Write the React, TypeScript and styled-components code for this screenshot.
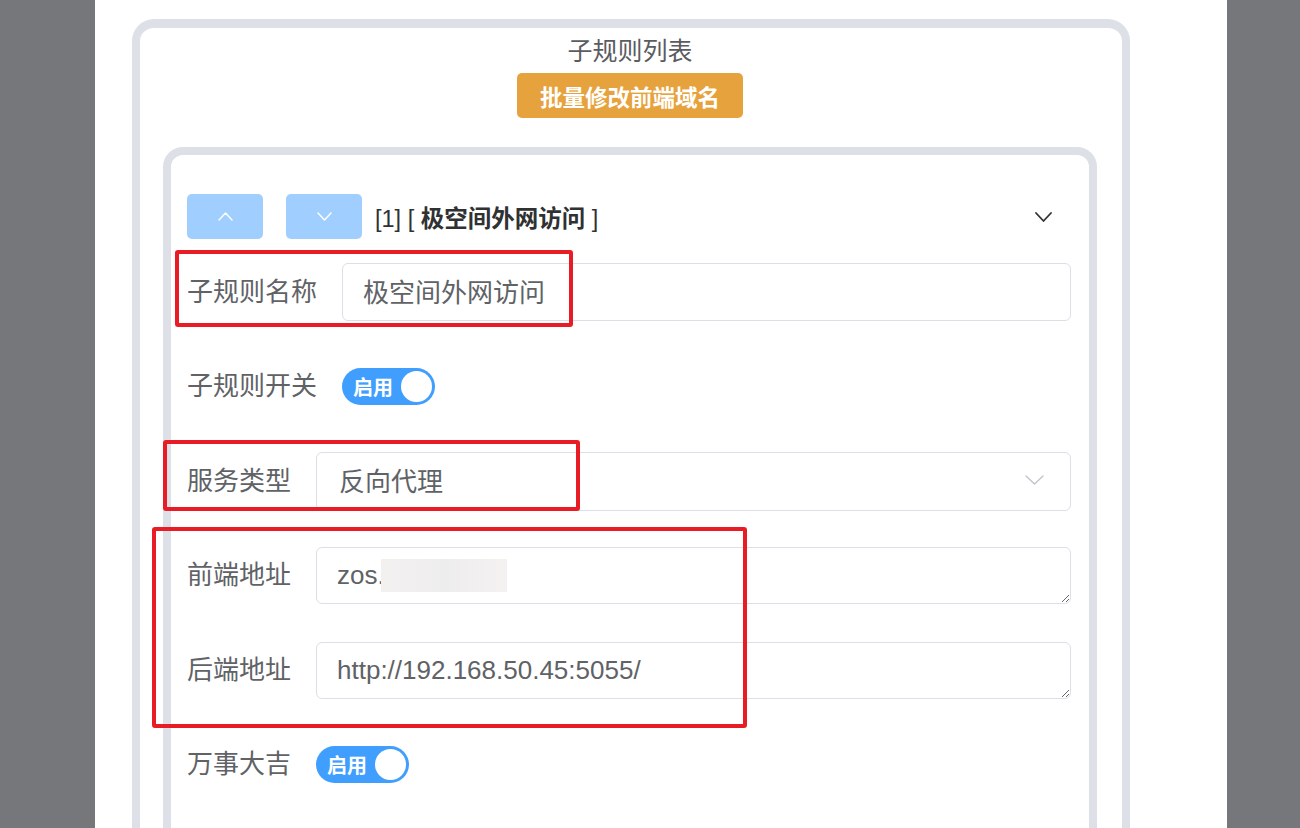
import React from 'react';
import styled, { createGlobalStyle } from 'styled-components';

const GlobalStyle = createGlobalStyle`
  html, body {
    margin: 0;
    padding: 0;
    background: #75777b;
    font-family: "Liberation Sans", "Noto Sans CJK SC", sans-serif;
    overflow: hidden;
  }
  * {
    box-sizing: border-box;
  }
`;

const Page = styled.div`
  min-height: 100vh;
  padding-left: 95px;
  display: flex;
`;

const Panel = styled.div`
  position: relative;
  width: 1132px;
  min-height: 828px;
  height: 828px;
  overflow: hidden;
  background: #ffffff;
  padding: 19px 0 0 37px;
`;

const OuterCard = styled.section`
  width: 998px;
  min-height: 900px;
  border: 8px solid #dde0e7;
  border-top-width: 9px;
  border-radius: 22px;
  padding: 5px 25px 0 23px;
  display: flex;
  flex-direction: column;
  align-items: center;
`;

const Title = styled.h2`
  margin: 0;
  font-size: 25px;
  line-height: 36px;
  font-weight: 400;
  color: #5a5c61;
`;

const WarnButton = styled.button`
  margin-top: 4px;
  height: 45px;
  padding: 0 23px;
  border: none;
  border-radius: 5px;
  background: #e6a23c;
  color: #ffffff;
  font-family: inherit;
  font-size: 22.5px;
  font-weight: 700;
  cursor: pointer;
`;

const RuleCard = styled.div`
  align-self: stretch;
  margin-top: 29px;
  min-height: 800px;
  border: 8px solid #dde0e7;
  border-radius: 20px;
  padding: 39px 18px 0 16px;
`;

const RuleHeader = styled.div`
  display: flex;
  align-items: center;
  height: 45px;
  margin-bottom: 24px;
`;

const MoveButton = styled.button`
  width: 76px;
  height: 45px;
  border: none;
  border-radius: 5px;
  background: #a0cfff;
  display: flex;
  align-items: center;
  justify-content: center;
  padding: 0;
  margin-right: 23px;
  cursor: not-allowed;
  &:last-of-type {
    margin-right: 13px;
  }
`;

const RuleTitle = styled.div`
  font-size: 23.5px;
  color: #303133;
  white-space: pre;
  b {
    font-weight: 600;
  }
`;

const Arrow = styled.span`
  margin-left: auto;
  margin-right: 19px;
  display: flex;
`;

const Row = styled.div`
  display: flex;
  align-items: center;
  height: 58px;
  margin-bottom: 36.5px;
`;

const Label = styled.label`
  flex-shrink: 0;
  padding-right: 25px;
  font-size: 26px;
  line-height: 30px;
  margin-top: -1px;
  color: #606266;
  white-space: nowrap;
`;

const TextInput = styled.input`
  flex: 1;
  height: 58px;
  border: 1px solid #dcdfe6;
  border-radius: 6px;
  padding: 0 20px 3px;
  font-family: inherit;
  font-size: 26px;
  color: #606266;
  outline: none;
`;

const SelectBox = styled.div`
  flex: 1;
  height: 59px;
  border: 1px solid #dcdfe6;
  border-radius: 6px;
  padding: 0 26px 3px 22px;
  display: flex;
  align-items: center;
  justify-content: space-between;
  font-size: 26px;
  color: #606266;
`;

const FieldWrap = styled.div`
  position: relative;
  flex: 1;
  display: flex;
`;

const TextArea = styled.textarea`
  flex: 1;
  height: 57px;
  border: 1px solid #dcdfe6;
  border-radius: 6px;
  padding: 9px 20px;
  font-family: inherit;
  font-size: 26px;
  line-height: 36px;
  color: #606266;
  resize: vertical;
  outline: none;
  overflow: hidden;
`;

const Redacted = styled.span`
  position: absolute;
  left: 65px;
  top: 12px;
  width: 126px;
  height: 33px;
  background: linear-gradient(90deg, #f3f0f0, #eeeded 50%, #f4f1f1);
`;

const Switch = styled.div`
  width: 93px;
  height: 37px;
  border-radius: 19px;
  background: #409eff;
  display: flex;
  align-items: center;
  justify-content: space-between;
  padding: 0 3px 0 11px;
  color: #ffffff;
  font-size: 20px;
  font-weight: 700;
`;

const Knob = styled.span`
  width: 31px;
  height: 31px;
  border-radius: 50%;
  background: #ffffff;
`;

const Annotation = styled.div<{ $left: number; $top: number; $w: number; $h: number }>`
  position: absolute;
  left: ${p => p.$left}px;
  top: ${p => p.$top}px;
  width: ${p => p.$w}px;
  height: ${p => p.$h}px;
  border: 4px solid #e81c25;
  border-radius: 3px;
  pointer-events: none;
`;

const Chevron = ({ up, color, w, h, sw }: { up?: boolean; color: string; w: number; h: number; sw: number }) => (
  <svg width={w} height={h} viewBox={`0 0 ${w} ${h}`} fill="none">
    <polyline
      points={up ? `1,${h - 1} ${w / 2},1 ${w - 1},${h - 1}` : `1,1 ${w / 2},${h - 1} ${w - 1},1`}
      stroke={color}
      strokeWidth={sw}
      strokeLinecap="round"
      strokeLinejoin="round"
    />
  </svg>
);

const Toggle = () => (
  <Switch>
    启用
    <Knob />
  </Switch>
);

export default function App() {
  return (
    <>
      <GlobalStyle />
      <Page>
        <Panel>
          <OuterCard>
            <Title>子规则列表</Title>
            <WarnButton>批量修改前端域名</WarnButton>

            <RuleCard>
              <RuleHeader>
                <MoveButton><Chevron up color="#ffffff" w={15} h={9} sw={1.4} /></MoveButton>
                <MoveButton><Chevron color="#ffffff" w={15} h={9} sw={1.4} /></MoveButton>
                <RuleTitle>[1] [ <b>极空间外网访问</b> ]</RuleTitle>
                <Arrow><Chevron color="#303133" w={17} h={10} sw={1.8} /></Arrow>
              </RuleHeader>

              <Row>
                <Label>子规则名称</Label>
                <TextInput readOnly value="极空间外网访问" />
              </Row>

              <Row>
                <Label>子规则开关</Label>
                <Toggle />
              </Row>

              <Row>
                <Label>服务类型</Label>
                <SelectBox>
                  反向代理
                  <Chevron color="#c0c4cc" w={19} h={10} sw={1.4} />
                </SelectBox>
              </Row>

              <Row>
                <Label>前端地址</Label>
                <FieldWrap>
                  <TextArea readOnly value="zos." />
                  <Redacted />
                </FieldWrap>
              </Row>

              <Row>
                <Label>后端地址</Label>
                <FieldWrap>
                  <TextArea readOnly value="http://192.168.50.45:5055/" />
                </FieldWrap>
              </Row>

              <Row>
                <Label>万事大吉</Label>
                <Toggle />
              </Row>
            </RuleCard>
          </OuterCard>

          <Annotation $left={80} $top={250} $w={398} $h={77} />
          <Annotation $left={68} $top={440} $w={417} $h={71} />
          <Annotation $left={57} $top={527} $w={595} $h={201} />
        </Panel>
      </Page>
    </>
  );
}
